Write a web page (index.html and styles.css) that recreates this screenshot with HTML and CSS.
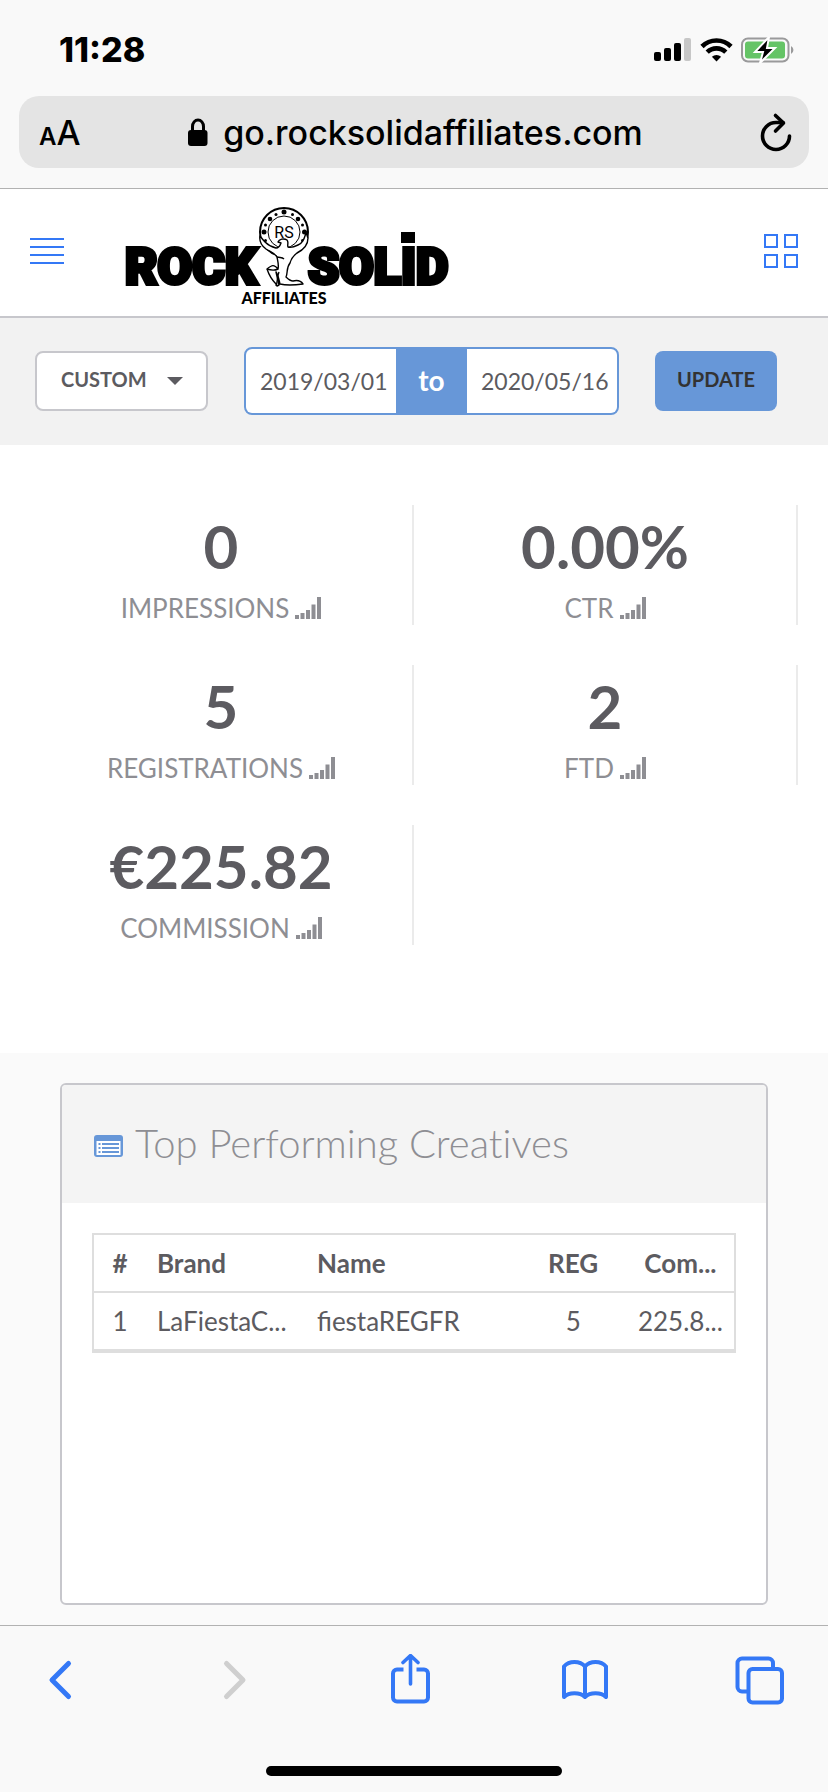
FILE: index.html
```html
<!DOCTYPE html>
<html lang="en">
<head>
    <meta charset="utf-8">
    <meta name="viewport" content="width=device-width, initial-scale=1">
    <title>Rock Solid Affiliates</title>
    <link rel="stylesheet" href="styles.css">
</head>
<body>
    <div class="browser-top">
        <div class="status-bar">
            <span class="time">11:28</span>
            <div class="status-icons">
                <svg width="38" height="24" viewBox="0 0 38 24">
                    <rect x="0" y="14" width="7" height="9" rx="2"/>
                    <rect x="10" y="10" width="7" height="13" rx="2"/>
                    <rect x="20" y="5" width="7" height="18" rx="2"/>
                    <rect x="30" y="0" width="7" height="23" rx="2" fill="#c7c7c7"/>
                </svg>
                <svg width="33" height="24" viewBox="0 0 33 24" fill="none" stroke="#000" stroke-width="4.6">
                    <path d="M2 8.5a20.5 20.5 0 0 1 29 0"/>
                    <path d="M7.2 14.2a13.2 13.2 0 0 1 18.6 0"/>
                    <path d="M11.9 18.8a6.6 6.6 0 0 1 9.2 0L16.5 23.4z" fill="#000" stroke="none"/>
                </svg>
                <svg width="54" height="26" viewBox="0 0 54 26">
                    <rect x="1" y="1.5" width="46.500" height="23" rx="6" fill="none" stroke="#9a9a9b" stroke-width="2"/>
                    <path d="M50 9a4.500 4.500 0 0 1 0 8z" fill="#9a9a9b"/>
                    <rect x="4" y="4.500" width="40" height="17" rx="3" fill="#65c466"/>
                    <path d="M28 0 14 15h8l-3 11L34 11h-8z" stroke="#fff" stroke-width="2"/>
                </svg>
            </div>
        </div>
        <div class="address-bar">
            <button class="text-size" aria-label="Text size"><span>A</span>A</button>
            <button class="url">
                <svg width="20" height="28" viewBox="0 0 20 28">
                    <path d="M4.500 13V8.500a5.500 6.500 0 0 1 11 0V13" fill="none" stroke="#000" stroke-width="3"/>
                    <rect x="0" y="12" width="19.500" height="16" rx="3"/>
                </svg>
                go.rocksolidaffiliates.com
            </button>
            <button class="reload" aria-label="Reload">
                <svg width="33" height="40" viewBox="0 0 33 40" fill="none" stroke="#000" stroke-width="3.600" stroke-linecap="round" stroke-linejoin="round">
                    <path d="M30.500 24A13.500 13.500 0 1 1 17 10.500H24"/>
                    <path d="M16.500 3.500 24.500 11l-8 8"/>
                </svg>
            </button>
        </div>
    </div>

    <header class="site-header">
        <button class="menu-btn" aria-label="Menu">
            <svg width="34" height="34" viewBox="0 0 34 34" fill="#3478f6">
                <path d="M0 4h34v2H0zM0 12h34v2H0zM0 20h34v2H0zM0 28h34v2H0z"/>
            </svg>
        </button>
        <a class="logo" href="#" aria-label="Rock Solid Affiliates">
            <svg width="324" height="100" viewBox="0 0 324 100">
                <g class="wordmark">
                    <text x="0" y="78">ROCK</text>
                    <text x="183" y="78">SOLID</text>
                </g>
                <rect x="276" y="26" width="14" height="11"/>
                <!-- casino chip -->
                <circle cx="159" cy="26" r="24" fill="#fff" stroke="#000" stroke-width="2"/>
                <circle cx="159" cy="26" r="16" fill="none" stroke="#000"/>
                <g>
                    <circle cx="159" cy="6" r="2.500"/>
                    <circle cx="167.500" cy="8.500" r="1.500"/>
                    <circle cx="173" cy="13" r="2.300"/>
                    <circle cx="177.500" cy="19" r="1.500"/>
                    <circle cx="179.500" cy="26" r="2.500"/>
                    <circle cx="177.500" cy="34.500" r="1.500"/>
                    <circle cx="140.500" cy="34.500" r="1.500"/>
                    <circle cx="139" cy="26" r="2.500"/>
                    <circle cx="140.500" cy="19" r="1.500"/>
                    <circle cx="145" cy="13" r="2.300"/>
                    <circle cx="151" cy="8.500" r="1.500"/>
                </g>
                <text class="chip-text" x="159" y="32">RS</text>
                <!-- kneeling figure -->
                <path class="figure" d="M135 30c-1 6 2 10 6 13 5 3 9 4 11 8 1 5 2 8 1 12-4-5-6-4-11 0 2 6 5 11 9 15l1 2 2-1-3-13c2 2 3 8 4 12 8 2 16 1 23 0-2-3-6-4-10-3-3 0-5-2-7-4 2-4 0-9 4-14 1-4 3-7 7-10 6-3 11-7 11-15-1-2-1-4-2-5-2 6-3 10-8 12-4 2-7 3-10 2-1-2 1-5-1-7-3-2-8-1-9 2l3 1c-1 3-2 5-5 5-4-1-8-3-11-6-3-3-4-5-5-6z"/>
                <path class="figure" d="M153 63c-4 2-8 1-11 0M152 51c3 1 5 0 7 2M151 80c2-5 1-10 3-14"/>
                <text class="tagline" x="159" y="98">AFFILIATES</text>
            </svg>
        </a>
        <button class="apps-btn" aria-label="Dashboard">
            <svg width="34" height="34" viewBox="0 0 34 34" fill="none" stroke="#3478f6" stroke-width="2">
                <rect x="1" y="1" width="12" height="12"/>
                <rect x="21" y="1" width="12" height="12"/>
                <rect x="1" y="21" width="12" height="12"/>
                <rect x="21" y="21" width="12" height="12"/>
            </svg>
        </button>
    </header>

    <form class="filters">
        <div class="select-wrap">
            <select class="range-select" aria-label="Date range">
                <option>CUSTOM</option>
            </select>
        </div>
        <div class="date-range">
            <input type="text" value="2019/03/01" aria-label="From date">
            <span>to</span>
            <input type="text" value="2020/05/16" aria-label="To date">
        </div>
        <button type="button" class="update-btn">UPDATE</button>
    </form>

    <svg class="sprite" width="0" height="0">
        <symbol id="bars" viewBox="0 0 26 22">
            <path d="M0 18h4v4H0zM5.500 16h4v6h-4zM11 13h4v9h-4zM16.500 7.500h4V22h-4zM22 0h4v22h-4z"/>
        </symbol>
    </svg>

    <section class="stats">
        <div class="stat">
            <div class="value">0</div>
            <div class="label">IMPRESSIONS <svg width="26" height="22"><use href="#bars"/></svg></div>
        </div>
        <div class="stat">
            <div class="value">0.00%</div>
            <div class="label">CTR <svg width="26" height="22"><use href="#bars"/></svg></div>
        </div>
        <div class="stat">
            <div class="value">5</div>
            <div class="label">REGISTRATIONS <svg width="26" height="22"><use href="#bars"/></svg></div>
        </div>
        <div class="stat">
            <div class="value">2</div>
            <div class="label">FTD <svg width="26" height="22"><use href="#bars"/></svg></div>
        </div>
        <div class="stat">
            <div class="value">€225.82</div>
            <div class="label">COMMISSION <svg width="26" height="22"><use href="#bars"/></svg></div>
        </div>
    </section>

    <main class="content">
        <section class="card">
            <div class="card-header">
                <svg width="29" height="22" viewBox="0 0 29 22">
                    <rect width="29" height="22" rx="3" fill="#6797d8"/>
                    <path d="M2.500 6h24v14h-24z" fill="#fff"/>
                    <path d="M4.500 8h2v2h-2zM8 8h17v2H8zM4.500 12h2v2h-2zM8 12h17v2H8zM4.500 16h2v2h-2zM8 16h17v2H8z" fill="#6797d8"/>
                </svg>
                <h2>Top Performing Creatives</h2>
            </div>
            <div class="card-body">
                <table class="creatives">
                    <thead>
                        <tr>
                            <th class="col-num">#</th>
                            <th class="col-brand">Brand</th>
                            <th class="col-name">Name</th>
                            <th class="col-figure">REG</th>
                            <th class="col-figure">Com...</th>
                        </tr>
                    </thead>
                    <tbody>
                        <tr>
                            <td class="col-num">1</td>
                            <td>LaFiestaC...</td>
                            <td>fiestaREGFR</td>
                            <td class="col-figure">5</td>
                            <td class="col-figure">225.8...</td>
                        </tr>
                    </tbody>
                </table>
            </div>
        </section>
    </main>

    <footer class="browser-bottom">
        <nav class="toolbar">
            <button aria-label="Back">
                <svg width="50" height="52" viewBox="0 0 50 52"><path d="M33.500 9.500 17 26l16.500 16.500" stroke-width="5"/></svg>
            </button>
            <button aria-label="Forward" disabled>
                <svg width="50" height="52" viewBox="0 0 50 52"><path d="M16.500 9.500 33 26 16.500 42.500" stroke-width="5"/></svg>
            </button>
            <button aria-label="Share">
                <svg width="50" height="52" viewBox="0 0 50 52">
                    <path d="M18.500 15.500H12a4 4 0 0 0-4 4v24a4 4 0 0 0 4 4h27a4 4 0 0 0 4-4v-24a4 4 0 0 0-4-4h-7.500" stroke-linecap="butt"/>
                    <path d="M25.500 30V2M18 8.500l7.500-7 7.500 7" stroke-width="3.600"/>
                </svg>
            </button>
            <button aria-label="Bookmarks">
                <svg width="50" height="52" viewBox="0 0 50 52">
                    <path d="M25 12.500C20 6.500 9 6.500 4 12.500v30.500c5-5 16-5 21 0 5-5 16-5 21 0V12.500C41 6.500 30 6.500 25 12.500zV43"/>
                </svg>
            </button>
            <button aria-label="Tabs">
                <svg width="50" height="52" viewBox="0 0 50 52">
                    <path d="M13 37.500H7a4.500 4.500 0 0 1-4.500-4.500V9A4.500 4.500 0 0 1 7 4.500h26.500A4.500 4.500 0 0 1 38 9v6" stroke-linecap="butt"/>
                    <rect x="13.500" y="15" width="33.500" height="33.500" rx="4"/>
                </svg>
            </button>
        </nav>
        <div class="home-indicator"></div>
    </footer>
</body>
</html>
```

FILE: styles.css
```css
* {
    box-sizing: border-box;
}
body {
    margin: 0;
    background: #fafafa;
    color: #5c5b60;
    font-family: Lato, sans-serif;
    font-size: 26px;
}
button {
    padding: 0;
    border: none;
    background: none;
    color: inherit;
    font: inherit;
    cursor: pointer;
}
svg {
    display: block;
    flex: none;
}
.sprite {
    position: absolute;
}

/* browser chrome */
.browser-top {
    padding: 0 19px 20px;
    border-bottom: 1px solid #b2b2b2;
    background: #f9f9f9;
    color: #000;
    font-family: Inter, sans-serif;
}
.status-bar {
    display: flex;
    justify-content: space-between;
    align-items: center;
    height: 96px;
    padding: 3px 14px 0 40px;
}
.time {
    font-size: 34px;
    font-weight: 800;
}
.status-icons {
    display: flex;
    align-items: center;
    gap: 8px;
}
.address-bar {
    display: grid;
    grid-template-columns: 1fr auto 1fr;
    align-items: center;
    height: 72px;
    padding: 0 17px 0 20px;
    border-radius: 20px;
    background: #e4e4e4;
}
.text-size {
    justify-self: start;
    font-size: 34px;
    font-weight: 500;
}
.text-size span {
    font-size: 24px;
    font-weight: 600;
}
.url {
    display: flex;
    align-items: center;
    gap: 15px;
    font-size: 34px;
    font-weight: 500;
}
.reload {
    justify-self: end;
}

/* header */
.site-header {
    display: flex;
    align-items: center;
    height: 129px;
    padding: 0 30px 4px;
    border-bottom: 2px solid #c7c7cc;
    background: #fff;
}
.logo {
    margin: 10px auto 0 61px;
    color: #000;
}
.wordmark {
    font-family: Roboto, sans-serif;
    font-size: 50px;
    font-weight: 900;
    stroke: #000;
    stroke-width: 4px;
}
.chip-text {
    font-family: Roboto, sans-serif;
    font-size: 16px;
    text-anchor: middle;
}
.figure {
    fill: #fff;
    stroke: #000;
    stroke-width: 1.4px;
    stroke-linejoin: round;
}
.tagline {
    font-size: 16px;
    font-weight: 900;
    text-anchor: middle;
}

/* filters */
.filters {
    display: flex;
    align-items: center;
    gap: 36px;
    height: 127px;
    padding: 0 35px 2px;
    background: #f2f2f2;
}
.select-wrap {
    position: relative;
}
.select-wrap::after {
    content: "";
    position: absolute;
    top: 26px;
    right: 25px;
    border: 8px solid transparent;
    border-top-color: #5c5b60;
    border-bottom: none;
    pointer-events: none;
}
.range-select {
    display: block;
    appearance: none;
    width: 173px;
    height: 60px;
    padding: 0 24px 4px;
    border: 2px solid #c7c7cc;
    border-radius: 8px;
    background: #fff;
    color: #5c5b60;
    font: 700 20px Lato, sans-serif;
}
.date-range {
    display: flex;
    width: 375px;
    height: 68px;
    overflow: hidden;
    border: 2px solid #6797d8;
    border-radius: 8px;
    background: #6797d8;
}
.date-range input {
    flex: 1;
    min-width: 0;
    padding: 0 0 0 14px;
    border: none;
    background: #fff;
    color: #5c5b60;
    font: 23px Lato, sans-serif;
}
.date-range span {
    width: 71px;
    color: #fff;
    font-weight: 700;
    font-size: 28px;
    line-height: 62px;
    text-align: center;
}
.update-btn {
    width: 122px;
    height: 60px;
    padding-bottom: 4px;
    border-radius: 8px;
    background: #6797d8;
    color: #333;
    font-size: 20px;
    font-weight: 700;
}

/* stats */
.stats {
    display: grid;
    grid-template-columns: 1fr 1fr;
    row-gap: 40px;
    padding: 60px 30px 108px;
    background: #fff;
}
.stat {
    height: 120px;
    padding-top: 5px;
    border-right: 2px solid #ebebeb;
    text-align: center;
}
.value {
    font-size: 60px;
    font-weight: 700;
    line-height: 72px;
}
.label {
    display: flex;
    justify-content: center;
    align-items: center;
    gap: 6px;
    color: #8e8e93;
    line-height: 52px;
    fill: #8e8e93;
}

/* creatives */
.content {
    padding: 30px 60px 20px;
}
.card {
    min-height: 522px;
    overflow: hidden;
    border: 2px solid #c7c7cc;
    border-radius: 6px;
    background: #fff;
}
.card-header {
    display: flex;
    align-items: center;
    gap: 12px;
    height: 118px;
    padding: 4px 32px 0;
    background: #f4f4f4;
}
.card-header h2 {
    margin: 0;
    padding-bottom: 6px;
    color: #8e8e93;
    font-size: 40px;
    font-variant-ligatures: none;
    font-weight: 300;
}
.card-body {
    padding: 30px;
}
.creatives {
    width: 100%;
    table-layout: fixed;
    border: 2px solid #dedede;
    border-bottom-width: 4px;
    border-spacing: 0;
}
.creatives th,
.creatives td {
    height: 56px;
    padding: 0 0 0 15px;
    line-height: 32px;
    text-align: left;
    white-space: nowrap;
}
.creatives th {
    height: 58px;
    border-bottom: 2px solid #dedede;
}
.creatives .col-num {
    width: 48px;
    padding-left: 4px;
    text-align: center;
}
.col-brand {
    width: 25%;
}
.col-name {
    width: 34%;
}
.creatives .col-figure {
    padding: 0;
    text-align: center;
}

/* bottom bar */
.browser-bottom {
    padding-bottom: 16px;
    border-top: 1px solid #b2b2b2;
    background: #f9f9f9;
}
.toolbar {
    display: flex;
    justify-content: space-between;
    height: 140px;
    padding: 28px 43px 0 35px;
}
.toolbar button {
    height: 52px;
}
.toolbar svg {
    fill: none;
    stroke: #3478f6;
    stroke-width: 4;
    stroke-linecap: round;
    stroke-linejoin: round;
}
.toolbar button:disabled svg {
    stroke: #cfcfcf;
}
.home-indicator {
    width: 296px;
    height: 10px;
    margin: 0 auto;
    border-radius: 5px;
    background: #000;
}
```
